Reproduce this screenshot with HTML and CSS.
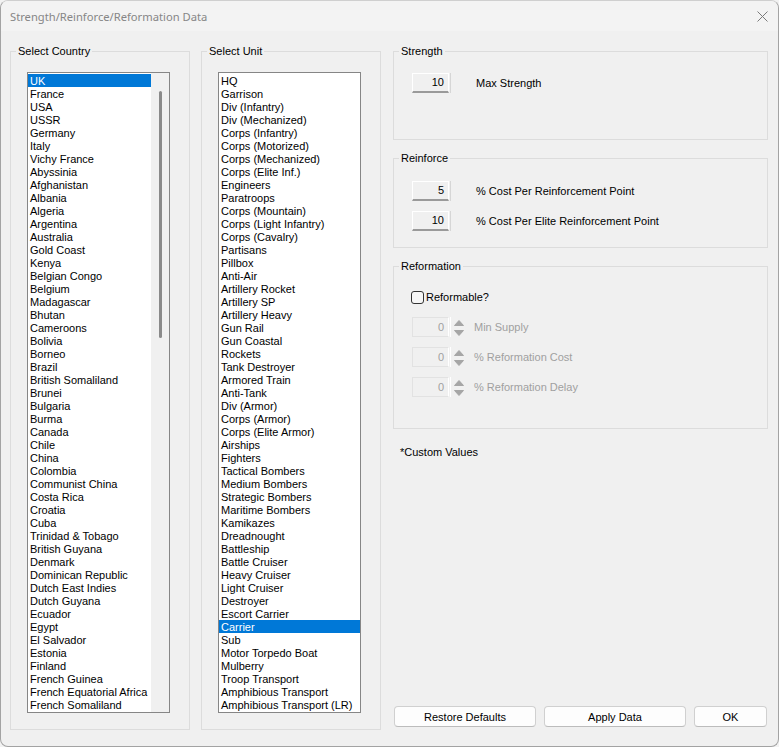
FILE: index.html
```html
<!DOCTYPE html>
<html lang="en">
<head>
    <meta charset="UTF-8">
    <meta name="viewport" content="width=device-width, initial-scale=1.0">
    <title>Strength/Reinforce/Reformation Data</title>
    <link rel="stylesheet" href="styles.css">
</head>
<body>

<div class="window">
    <div class="titlebar">
        <span class="title">Strength/Reinforce/Reformation Data</span>
        <svg class="close" width="11" height="11" viewBox="0 0 11 11">
            <path d="M0.5 0.5 L10.5 10.5 M10.5 0.5 L0.5 10.5" stroke="#7a7a7a" stroke-width="1" fill="none"/>
        </svg>
    </div>

    <div class="dialog">
        <fieldset class="group list-group">
            <legend>Select Country</legend>
            <div class="listbox">
                <ul class="items">
                    <li class="selected">UK</li>
                    <li>France</li>
                    <li>USA</li>
                    <li>USSR</li>
                    <li>Germany</li>
                    <li>Italy</li>
                    <li>Vichy France</li>
                    <li>Abyssinia</li>
                    <li>Afghanistan</li>
                    <li>Albania</li>
                    <li>Algeria</li>
                    <li>Argentina</li>
                    <li>Australia</li>
                    <li>Gold Coast</li>
                    <li>Kenya</li>
                    <li>Belgian Congo</li>
                    <li>Belgium</li>
                    <li>Madagascar</li>
                    <li>Bhutan</li>
                    <li>Cameroons</li>
                    <li>Bolivia</li>
                    <li>Borneo</li>
                    <li>Brazil</li>
                    <li>British Somaliland</li>
                    <li>Brunei</li>
                    <li>Bulgaria</li>
                    <li>Burma</li>
                    <li>Canada</li>
                    <li>Chile</li>
                    <li>China</li>
                    <li>Colombia</li>
                    <li>Communist China</li>
                    <li>Costa Rica</li>
                    <li>Croatia</li>
                    <li>Cuba</li>
                    <li>Trinidad &amp; Tobago</li>
                    <li>British Guyana</li>
                    <li>Denmark</li>
                    <li>Dominican Republic</li>
                    <li>Dutch East Indies</li>
                    <li>Dutch Guyana</li>
                    <li>Ecuador</li>
                    <li>Egypt</li>
                    <li>El Salvador</li>
                    <li>Estonia</li>
                    <li>Finland</li>
                    <li>French Guinea</li>
                    <li>French Equatorial Africa</li>
                    <li>French Somaliland</li>
                </ul>
                <div class="scrollbar"><div class="thumb"></div></div>
            </div>
        </fieldset>

        <fieldset class="group list-group">
            <legend>Select Unit</legend>
            <div class="listbox">
                <ul class="items">
                    <li>HQ</li>
                    <li>Garrison</li>
                    <li>Div (Infantry)</li>
                    <li>Div (Mechanized)</li>
                    <li>Corps (Infantry)</li>
                    <li>Corps (Motorized)</li>
                    <li>Corps (Mechanized)</li>
                    <li>Corps (Elite Inf.)</li>
                    <li>Engineers</li>
                    <li>Paratroops</li>
                    <li>Corps (Mountain)</li>
                    <li>Corps (Light Infantry)</li>
                    <li>Corps (Cavalry)</li>
                    <li>Partisans</li>
                    <li>Pillbox</li>
                    <li>Anti-Air</li>
                    <li>Artillery Rocket</li>
                    <li>Artillery SP</li>
                    <li>Artillery Heavy</li>
                    <li>Gun Rail</li>
                    <li>Gun Coastal</li>
                    <li>Rockets</li>
                    <li>Tank Destroyer</li>
                    <li>Armored Train</li>
                    <li>Anti-Tank</li>
                    <li>Div (Armor)</li>
                    <li>Corps (Armor)</li>
                    <li>Corps (Elite Armor)</li>
                    <li>Airships</li>
                    <li>Fighters</li>
                    <li>Tactical Bombers</li>
                    <li>Medium Bombers</li>
                    <li>Strategic Bombers</li>
                    <li>Maritime Bombers</li>
                    <li>Kamikazes</li>
                    <li>Dreadnought</li>
                    <li>Battleship</li>
                    <li>Battle Cruiser</li>
                    <li>Heavy Cruiser</li>
                    <li>Light Cruiser</li>
                    <li>Destroyer</li>
                    <li>Escort Carrier</li>
                    <li class="selected">Carrier</li>
                    <li>Sub</li>
                    <li>Motor Torpedo Boat</li>
                    <li>Mulberry</li>
                    <li>Troop Transport</li>
                    <li>Amphibious Transport</li>
                    <li>Amphibious Transport (LR)</li>
                </ul>
            </div>
        </fieldset>

        <div class="side">
            <fieldset class="group strength">
                <legend>Strength</legend>
                <div class="field">
                    <span class="edit">10</span>
                    <span class="field-label">Max Strength</span>
                </div>
            </fieldset>

            <fieldset class="group reinforce">
                <legend>Reinforce</legend>
                <div class="field">
                    <span class="edit">5</span>
                    <span class="field-label">% Cost Per Reinforcement Point</span>
                </div>
                <div class="field">
                    <span class="edit">10</span>
                    <span class="field-label">% Cost Per Elite Reinforcement Point</span>
                </div>
            </fieldset>

            <fieldset class="group reformation">
                <legend>Reformation</legend>
                <label class="check">
                    <span class="box"></span>
                    Reformable?
                </label>
                <div class="field disabled">
                    <span class="edit">0</span>
                    <svg class="spin" width="10" height="16" viewBox="0 0 10 16">
                        <path d="M5 0.5 L9.5 5.5 L0.5 5.5 Z M0.5 10.5 L9.5 10.5 L5 15.5 Z" fill="#a6a6a6" stroke="#a6a6a6" stroke-linejoin="round"/>
                    </svg>
                    <span class="field-label">Min Supply</span>
                </div>
                <div class="field disabled">
                    <span class="edit">0</span>
                    <svg class="spin" width="10" height="16" viewBox="0 0 10 16">
                        <path d="M5 0.5 L9.5 5.5 L0.5 5.5 Z M0.5 10.5 L9.5 10.5 L5 15.5 Z" fill="#a6a6a6" stroke="#a6a6a6" stroke-linejoin="round"/>
                    </svg>
                    <span class="field-label">% Reformation Cost</span>
                </div>
                <div class="field disabled">
                    <span class="edit">0</span>
                    <svg class="spin" width="10" height="16" viewBox="0 0 10 16">
                        <path d="M5 0.5 L9.5 5.5 L0.5 5.5 Z M0.5 10.5 L9.5 10.5 L5 15.5 Z" fill="#a6a6a6" stroke="#a6a6a6" stroke-linejoin="round"/>
                    </svg>
                    <span class="field-label">% Reformation Delay</span>
                </div>
            </fieldset>

            <p class="note">*Custom Values</p>

            <div class="buttons">
                <button class="btn wide">Restore Defaults</button>
                <button class="btn wide">Apply Data</button>
                <button class="btn ok">OK</button>
            </div>
        </div>
    </div>
</div>

</body>
</html>
```

FILE: styles.css
```css
html, body {
    margin: 0;
    padding: 0;
}

body {
    background-color: #f2f2f2;
    font-family: 'Liberation Sans', Arial, sans-serif;
    font-size: 11px;
    color: #000;
}

.window {
    box-sizing: border-box;
    width: 779px;
    height: 747px;
    border: 1px solid #a3a3a3;
    border-top-color: #cfcfcf;
    border-radius: 8px;
    overflow: hidden;
    background-color: #f0f0f0;
    display: flex;
    flex-direction: column;
}

.titlebar {
    height: 30px;
    flex: none;
    display: flex;
    align-items: center;
    justify-content: space-between;
    padding: 0 10px 0 9px;
    background-color: #f3f3f3;
}

.title {
    font-family: 'Noto Sans', 'Liberation Sans', sans-serif;
    font-size: 11.2px;
    color: #868686;
}

.close {
    display: block;
    margin-top: 1px;
}

.dialog {
    flex: 1;
    display: flex;
    column-gap: 11px;
    padding: 14px 10px 16px 9px;
}

/* group boxes */
.group {
    margin: 0;
    padding: 0;
    border: 1px solid #dcdcdc;
    min-width: 0;
}

.group legend {
    margin-left: 5px;
    padding: 0 2px;
    line-height: 13px;
    height: 13px;
}

.list-group {
    width: 180px;
    box-sizing: border-box;
    padding-top: 14px;
}

/* list boxes */
.listbox {
    box-sizing: border-box;
    width: 143px;
    height: 641px;
    margin-left: 16px;
    border: 1px solid #868686;
    background-color: #fff;
    display: flex;
    overflow: hidden;
}

.items {
    list-style: none;
    margin: 0;
    padding: 1px 0 0 0;
    flex: 1;
    min-width: 0;
}

.items li {
    height: 12px;
    padding: 1px 0 0 2px;
    line-height: 13px;
    white-space: nowrap;
}

.items li.selected {
    background-color: #0078d7;
    color: #fff;
}

.scrollbar {
    width: 18px;
    flex: none;
    background-color: #f0f0f0;
}

.thumb {
    width: 3px;
    height: 247px;
    margin: 18px 0 0 8px;
    border-radius: 2px;
    background-color: #8a8a8a;
}

/* right side */
.side {
    flex: 1;
    margin-left: 1px;
    display: flex;
    flex-direction: column;
    row-gap: 12px;
}

.strength {
    padding: 15px 0 46px 0;
}

.reinforce {
    padding: 16px 0 16px 0;
    display: flex;
    flex-direction: column;
    row-gap: 10px;
}

.reformation {
    padding: 18px 0 31px 0;
}

.field {
    display: flex;
    align-items: center;
    margin-left: 18px;
}

.edit {
    box-sizing: border-box;
    width: 37px;
    height: 20px;
    padding-right: 4px;
    border: 1px solid #fff;
    border-bottom: 2px solid #9a9a9a;
    text-align: right;
    line-height: 17px;
    box-shadow: 1px 0 0 #f0f0f0, 2px 0 0 #d6d6d6;
}

.field-label {
    margin-left: 27px;
    padding-bottom: 1px;
}

.check {
    display: flex;
    align-items: center;
    column-gap: 2px;
    margin-left: 17px;
    height: 13px;
    line-height: 13px;
    margin-bottom: 13px;
}

.box {
    box-sizing: border-box;
    width: 13px;
    height: 13px;
    border: 1px solid #333;
    border-radius: 3px;
    background-color: #f6f6f6;
}

.reformation .field + .field {
    margin-top: 10px;
}

.disabled {
    color: #a0a0a0;
}

.disabled .edit {
    border: 1px solid #e2e2e2;
    border-right-color: #fff;
    box-shadow: 1px 0 0 #f0f0f0, 2px 0 0 #fff;
    line-height: 18px;
}

.spin {
    display: block;
    margin-left: 5px;
    margin-top: 1px;
}

.disabled .field-label {
    margin-left: 10px;
}

.note {
    margin: 5px 0 0 7px;
    line-height: 13px;
}

.buttons {
    margin-top: auto;
    margin-bottom: 3px;
    padding: 0 1px;
    display: flex;
    column-gap: 8px;
}

.btn {
    box-sizing: border-box;
    height: 21px;
    padding: 0;
    border: 1px solid #d0d0d0;
    border-bottom-color: #bcbcbc;
    border-radius: 4px;
    background-color: #fdfdfd;
    font-family: 'Liberation Sans', Arial, sans-serif;
    font-size: 11px;
    color: #000;
}

.wide {
    width: 142px;
}

.ok {
    width: 73px;
}
```
